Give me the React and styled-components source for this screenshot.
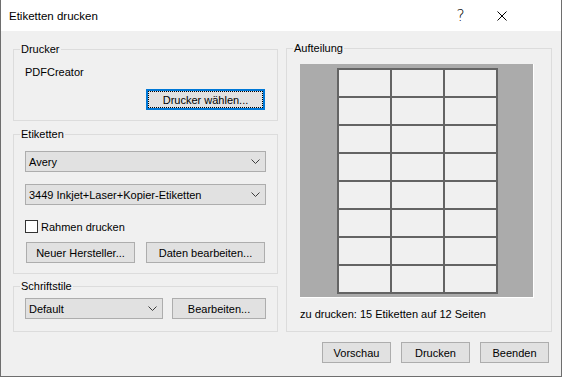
import React from 'react';
import styled, { createGlobalStyle } from 'styled-components';

const GlobalStyle = createGlobalStyle`
  html, body {
    margin: 0;
    padding: 0;
    background: #f0f0f0;
  }
  body {
    font-family: "Liberation Sans", Arial, sans-serif;
  }
`;

// 8 rows x 3 columns of labels on the preview page
const cells = Array.from({ length: 24 }, (_, i) => i);

const Chevron = () => (
  <svg width="9" height="5" viewBox="0 0 9 5">
    <polyline points="0.5,0.5 4.5,4.5 8.5,0.5" fill="none" stroke="#3c3c3c" strokeWidth="1" />
  </svg>
);

const CloseIcon = () => (
  <svg width="10" height="10" viewBox="0 0 10 10">
    <path d="M0.5 0.5 L9.5 9.5 M9.5 0.5 L0.5 9.5" stroke="#000" strokeWidth="1" />
  </svg>
);

function App() {
  return (
    <>
      <GlobalStyle />
      <Window>
        <TitleBar>
          <Title>Etiketten drucken</Title>
          <CaptionButton>
            <HelpGlyph>?</HelpGlyph>
          </CaptionButton>
          <CaptionButton>
            <CloseIcon />
          </CaptionButton>
        </TitleBar>

        <Body>
          <LeftColumn>
            <Group $mt={1} $pad="14px 12px 10px 11px">
              <Caption>Drucker</Caption>
              <TextLine>PDFCreator</TextLine>
              <EndRow $mt={9}>
                <Button $w={119} $focused>Drucker wählen...</Button>
              </EndRow>
            </Group>

            <Group $mt={13} $pad="16px 11px 10px 11px">
              <Caption>Etiketten</Caption>
              <Combo>
                <span>Avery</span>
                <Chevron />
              </Combo>
              <Combo $mt={12}>
                <span>3449 Inkjet+Laser+Kopier-Etiketten</span>
                <Chevron />
              </Combo>
              <CheckRow>
                <CheckBox />
                <span>Rahmen drucken</span>
              </CheckRow>
              <SplitRow>
                <Button $w={109}>Neuer Hersteller...</Button>
                <Button $w={119}>Daten bearbeiten...</Button>
              </SplitRow>
            </Group>

            <Group $mt={12} $pad="11px 11px 12px 11px">
              <Caption>Schriftstile</Caption>
              <FontRow>
                <Combo $w={138}>
                  <span>Default</span>
                  <Chevron />
                </Combo>
                <Button $w={94}>Bearbeiten...</Button>
              </FontRow>
            </Group>
          </LeftColumn>

          <Group $pad="15px 13px 0 13px">
            <Caption>Aufteilung</Caption>
            <Preview>
              <Page>
                {cells.map((c) => (
                  <Cell key={c} />
                ))}
              </Page>
            </Preview>
            <Status>zu drucken: 15 Etiketten auf 12 Seiten</Status>
          </Group>
        </Body>

        <Footer>
          <Button $w={69}>Vorschau</Button>
          <Button $w={69}>Drucken</Button>
          <Button $w={69}>Beenden</Button>
        </Footer>
      </Window>
    </>
  );
}

const Window = styled.div`
  width: 562px;
  height: 377px;
  box-sizing: border-box;
  border: 1px solid #6e6e6e;
  border-top: none;
  background: #f0f0f0;
  display: flex;
  flex-direction: column;
  font-size: 11px;
  color: #000;
`;

const TitleBar = styled.div`
  height: 31px;
  flex: none;
  background: #fff;
  display: flex;
  align-items: center;
  padding: 0 39px 0 8px;
`;

const Title = styled.div`
  flex: 1;
  font-size: 11.5px;
  line-height: 16px;
  padding-top: 1px;
`;

const CaptionButton = styled.div`
  width: 41px;
  height: 31px;
  display: flex;
  align-items: center;
  justify-content: center;
`;

const HelpGlyph = styled.span`
  font-family: "DejaVu Sans", "Liberation Sans", sans-serif;
  font-weight: 200;
  font-size: 15.5px;
  line-height: 16px;
  color: #000;
`;

const Body = styled.div`
  display: grid;
  grid-template-columns: 265px 266px;
  column-gap: 8px;
  padding: 17px 0 0 12px;
`;

const LeftColumn = styled.div`
  display: flex;
  flex-direction: column;
`;

const Group = styled.div`
  position: relative;
  display: flex;
  flex-direction: column;
  border: 1px solid #dcdcdc;
  margin-top: ${(p) => p.$mt || 0}px;
  padding: ${(p) => p.$pad};
`;

const Caption = styled.span`
  position: absolute;
  top: -9px;
  left: 6px;
  padding: 0 1px;
  line-height: 16px;
  background: #f0f0f0;
`;

const TextLine = styled.div`
  line-height: 16px;
`;

const EndRow = styled.div`
  display: flex;
  justify-content: flex-end;
  margin-top: ${(p) => p.$mt || 0}px;
`;

const Button = styled.div`
  position: relative;
  width: ${(p) => p.$w}px;
  height: 21px;
  box-sizing: border-box;
  display: flex;
  align-items: center;
  justify-content: center;
  background: #e1e1e1;
  border: 1px solid ${(p) => (p.$focused ? '#0078d7' : '#adadad')};
  box-shadow: ${(p) => (p.$focused ? 'inset 0 0 0 1px #0078d7' : 'none')};
  white-space: nowrap;

  &::after {
    content: '';
    display: ${(p) => (p.$focused ? 'block' : 'none')};
    position: absolute;
    inset: 1px;
    border: 1px dotted #000;
  }
`;

const Combo = styled.div`
  width: ${(p) => (p.$w ? `${p.$w}px` : 'auto')};
  height: 21px;
  box-sizing: border-box;
  margin-top: ${(p) => p.$mt || 0}px;
  display: flex;
  align-items: center;
  justify-content: space-between;
  padding: 0 5px 0 3px;
  background: #e1e1e1;
  border: 1px solid #adadad;
  white-space: nowrap;
`;

const CheckRow = styled.div`
  display: flex;
  align-items: center;
  gap: 3px;
  height: 13px;
  margin-top: 15px;
`;

const CheckBox = styled.div`
  width: 13px;
  height: 13px;
  box-sizing: border-box;
  border: 1px solid #333;
  background: #fff;
`;

const SplitRow = styled.div`
  display: flex;
  justify-content: space-between;
  margin-top: 9px;
  padding: 0 1px;
`;

const FontRow = styled.div`
  display: flex;
  gap: 9px;
`;

const Preview = styled.div`
  width: 234px;
  height: 234px;
  box-sizing: border-box;
  background: #ababab;
  border-right: 1px solid #fff;
  border-bottom: 1px solid #fff;
  display: flex;
  align-items: center;
  justify-content: center;
`;

const Page = styled.div`
  display: grid;
  grid-template-columns: repeat(3, 51px);
  grid-template-rows: repeat(8, 26px);
  gap: 2px;
  padding: 2px;
  background: #646464;
  margin-left: 2px;
`;

const Cell = styled.div`
  background: #f0f0f0;
`;

const Status = styled.div`
  margin-top: 8px;
  line-height: 16px;
`;

const Footer = styled.div`
  display: flex;
  justify-content: flex-end;
  gap: 10px;
  padding: 10px 12px 0 0;
`;

export default App;
